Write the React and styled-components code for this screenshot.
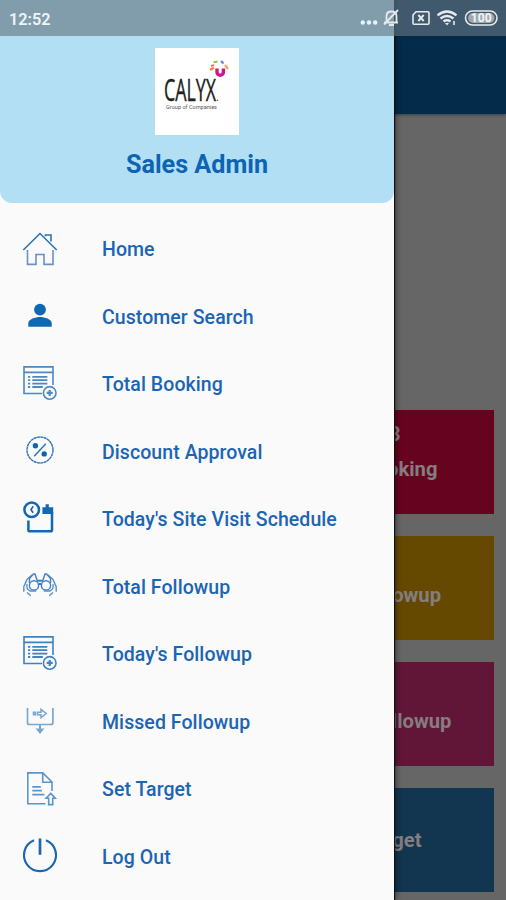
import React from 'react';
import styled, { createGlobalStyle } from 'styled-components';

const GlobalStyle = createGlobalStyle`
  * {
    box-sizing: border-box;
  }
  body {
    margin: 0;
    font-family: Roboto, sans-serif;
    overflow: hidden;
  }
`;

const Screen = styled.div`
  position: relative;
  width: 506px;
  height: 900px;
  overflow: hidden;
  background: #666;
`;

const Dashboard = styled.main`
  height: 100%;
`;

const AppBar = styled.header`
  height: 114px;
  background: #052b4a;
  box-shadow: 0 1px 3px rgba(0, 0, 0, 0.4);
`;

const CardList = styled.div`
  display: flex;
  flex-direction: column;
  align-items: flex-end;
  gap: 22px;
  padding: 296px 12px 0 0;
`;

const Card = styled.div`
  width: 238px;
  height: 104px;
  display: flex;
  flex-direction: column;
  align-items: center;
  justify-content: center;
  padding-bottom: ${props => (props.$count ? '20px' : '0')};
  background: ${props => props.$color};
  color: #857d80;
  font-size: 20.2px;
  font-weight: 700;
  line-height: 35px;
`;

const Drawer = styled.aside`
  position: absolute;
  top: 0;
  left: 0;
  width: 394px;
  height: 100%;
  background: #fafafa;
  box-shadow: 1px 0 1px #111, 2px 0 6px rgba(0, 0, 0, 0.4);
`;

const Profile = styled.div`
  height: 203px;
  padding-top: 48px;
  display: flex;
  flex-direction: column;
  align-items: center;
  background: #b2dff4;
  border-radius: 0 0 12px 12px;
`;

const Logo = styled.svg`
  width: 84px;
  height: 87px;
  background: #fff;
`;

const ProfileName = styled.h1`
  margin: 14px 0 0;
  font-size: 25.2px;
  font-weight: 700;
  line-height: 31px;
  color: #0d64b2;
`;

const Menu = styled.nav`
  display: flex;
  flex-direction: column;
  padding-top: 12px;
`;

const MenuItem = styled.a`
  height: 67.5px;
  display: flex;
  align-items: center;
  gap: 42px;
  padding-left: 20px;
  color: #1b65b4;
`;

const MenuIcon = styled.svg`
  width: 40px;
  height: 40px;
  flex-shrink: 0;
  fill: none;
  stroke: ${props => props.$color || '#2a73b8'};
  stroke-width: ${props => props.$weight || 1.4};
`;

const MenuLabel = styled.span`
  padding-top: 1.5px;
  font-size: 19.5px;
  font-weight: 500;
  letter-spacing: 0.07px;
`;

const StatusBar = styled.div`
  position: absolute;
  top: 0;
  left: 0;
  width: 100%;
  height: 36px;
  display: flex;
  align-items: center;
  justify-content: space-between;
  padding: 0 8px 0 9px;
  background: rgba(99, 117, 129, 0.63);
  color: #eef5f8;
`;

const Clock = styled.span`
  padding-top: 2px;
  font-size: 16.2px;
  font-weight: 600;
`;

const StatusIcons = styled.svg`
  width: 140px;
  height: 24px;
  fill: none;
  stroke: #e4eaee;
  stroke-width: 1.6;
`;

const HomeIcon = () => (
  <MenuIcon viewBox="0 0 40 40">
    <path d="M3.3 21 20 4.5 36.7 21M25.5 7.2V6H31v6.5" strokeWidth="1.6" />
    <path d="M7.5 21v14.4H16V25.5h8v9.9h9V21" stroke="#6c8fc9" strokeWidth="1.6" />
  </MenuIcon>
);

const PersonIcon = () => (
  <MenuIcon viewBox="0 0 40 40">
    <g fill="#0f68b4" stroke="none">
      <circle cx="20" cy="13.6" r="5.9" />
      <path d="M8.3 30.8V27c0-3.7 7.3-6 11.7-6s11.7 2.3 11.7 6v3.8z" />
    </g>
  </MenuIcon>
);

const ListIcon = ({ color = '#4c89c3' }) => (
  <MenuIcon viewBox="0 0 40 40" $color={color} $weight={1.6}>
    <path d="M22 29.5H4V2.9h29V21M4 8.4h29" />
    <path d="M8 12.8h2.2M8 16.2h2.2M8 19.6h2.2M8 23h2.2M12.3 12.8h15M12.3 16.2h15M12.3 19.6h15M12.3 23h10.5" strokeWidth="1.8" />
    <circle cx="29.7" cy="28.9" r="6.3" />
    <path d="M26.7 28.9h6M29.7 25.9v6" strokeWidth="2.2" />
  </MenuIcon>
);

const PercentIcon = () => (
  <MenuIcon viewBox="0 0 40 40">
    <circle cx="20" cy="19" r="13" strokeDasharray="3 0.4" />
    <path d="M14.2 25.2 25.8 12.8" />
    <circle cx="15.4" cy="14.8" r="2.7" fill="#0f62ad" stroke="none" />
    <circle cx="24.2" cy="22.9" r="2.7" fill="#0f62ad" stroke="none" />
  </MenuIcon>
);

const ScheduleIcon = () => (
  <MenuIcon viewBox="0 0 40 40" $color="#1268b2" $weight={2.5}>
    <circle cx="11.7" cy="10.7" r="7.3" />
    <path d="M13.2 7.2 11 10.7l2.2 3" strokeWidth="1.6" />
    <path d="M8.4 21.5V31q0 1.3 1.5 1.300h20.600q1.500 0 1.500-1.300V13" />
    <path d="M22.400 15V8.200h3.200V5.200h3.200v3h4.400V15z" fill="#1268b2" stroke="none" />
  </MenuIcon>
);

const BinocularsIcon = () => (
  <MenuIcon viewBox="0 0 40 40" $color="#3d80bf">
    <circle cx="14" cy="19.4" r="4.6" />
    <circle cx="26" cy="19.4" r="4.6" />
    <path d="M16.500 14.800h7M18.300 18h3.400" strokeWidth="2" />
    <path d="M9.500 17v-4.500l4-4.500h1.500l2 6M30.500 17v-4.500L26.500 8H25l-2 6" />
    <path d="M12.500 8.500 7 13.500l-3.200 7.200v5M27.500 8.500l5.500 5 3.200 7.200v5M7 18c-.8 4 .6 6 3.200 7h6M33 18c.8 4-.6 6-3.200 7h-6M7 26.500l3.800 3.300M33 26.500l-3.800 3.300" stroke="#5791c5" />
  </MenuIcon>
);

const MissedIcon = () => (
  <MenuIcon viewBox="0 0 40 40" $color="#79a8d2">
    <path d="M7.500 7v14.500q0 2 2 2h21.400q2 0 2-2V7" strokeWidth="1.7" />
    <path d="M13.500 11.200h1.800v2.600h-1.800zM17.500 11.200H21V8.300l5.200 4.200-5.200 4.200v-2.900h-3.500z" strokeWidth="1.600" />
    <path d="M20 24v4.500" strokeWidth="2" />
    <path d="M17 28.300h6L20 32z" fill="#79a8d2" />
  </MenuIcon>
);

const TargetIcon = () => (
  <MenuIcon viewBox="0 0 40 40" $color="#5996cc" $weight={1.6}>
    <path d="M25.500 34.800H7.800V3.900h15L32 13v9M22.700 4v9.200H32" />
    <path d="M12.300 17.800h8.500M12.300 21.600h9.500M12.300 25.600h12" strokeWidth="1.800" />
    <path d="M30.700 24.400l4.600 4.800h-2.600v6.400h-4v-6.400h-2.600z" />
  </MenuIcon>
);

const PowerIcon = () => (
  <MenuIcon viewBox="0 0 40 40" $color="#1c66ae" $weight={2.2}>
    <path d="M14 4.300a16 16 0 1 0 12 0" />
    <path d="M20 2.500v16.300" strokeWidth="2.700" />
  </MenuIcon>
);

const menuItems = [
  { label: 'Home', icon: <HomeIcon /> },
  { label: 'Customer Search', icon: <PersonIcon /> },
  { label: 'Total Booking', icon: <ListIcon /> },
  { label: 'Discount Approval', icon: <PercentIcon /> },
  { label: "Today's Site Visit Schedule", icon: <ScheduleIcon /> },
  { label: 'Total Followup', icon: <BinocularsIcon /> },
  { label: "Today's Followup", icon: <ListIcon color="#3d82c2" /> },
  { label: 'Missed Followup', icon: <MissedIcon /> },
  { label: 'Set Target', icon: <TargetIcon /> },
  { label: 'Log Out', icon: <PowerIcon /> },
];

const cards = [
  { label: 'Total Booking', count: '1,063', color: '#66041f' },
  { label: 'Total Followup', count: '0', color: '#664900' },
  { label: 'Missed Followup', count: '0', color: '#621637' },
  { label: 'Set Target', color: '#123550' },
];

const App = () => {
  return (
    <Screen>
      <GlobalStyle />
      <Dashboard>
        <AppBar />
        <CardList>
          {cards.map(card => (
            <Card key={card.label} $color={card.color} $count={card.count}>
              {card.count && <span>{card.count}</span>}
              <span>{card.label}</span>
            </Card>
          ))}
        </CardList>
      </Dashboard>
      <Drawer>
        <Profile>
          <Logo viewBox="0 0 84 87">
            <text x="9" y="53" fontSize="31.5" fontFamily="Open Sans, sans-serif" fill="#222" stroke="#222" strokeWidth="0.4" textLength="52" lengthAdjust="spacingAndGlyphs">
              CALYX
            </text>
            <circle cx="62.5" cy="52.3" r="0.8" fill="#555" />
            <text x="11" y="60.500" fontSize="5.800" fill="#555" textLength="51" lengthAdjust="spacingAndGlyphs">
              Group of Companies
            </text>
            <g fill="none" strokeWidth="2.4">
              <path d="M62 20.500v3.500a3.200 3.300 0 0 0 6.400 0v-3.500" stroke="#d0148c" strokeWidth="3.400" />
              <path d="M55 22l4-2.500" stroke="#f08a3c" />
              <path d="M56 18l3-1" stroke="#e85a4a" strokeWidth="1.800" />
              <path d="M58.500 14.300l4-.8" stroke="#8cc04c" strokeWidth="1.800" />
              <path d="M66 13l2.500 2.500" stroke="#7186cf" />
              <path d="M70 17l3 4" stroke="#f5a65a" />
            </g>
          </Logo>
          <ProfileName>Sales Admin</ProfileName>
        </Profile>
        <Menu>
          {menuItems.map(item => (
            <MenuItem key={item.label}>
              {item.icon}
              <MenuLabel>{item.label}</MenuLabel>
            </MenuItem>
          ))}
        </Menu>
      </Drawer>
      <StatusBar>
        <Clock>12:52</Clock>
        <StatusIcons viewBox="0 0 140 24">
          <g fill="#e9f2f6" stroke="none">
            <circle cx="4.8" cy="16.500" r="2.200" />
            <circle cx="11" cy="16.500" r="2.200" />
            <circle cx="17.200" cy="16.500" r="2.200" />
          </g>
          <path d="M26 16.500h14M28.500 16V10q0-4.500 5-4.500t5 4.500v6M31 19h5M26 18.500 40 4" strokeWidth="1.800" />
          <path d="M58 5.700h12q1 0 1 1v10.600q0 1-1 1H56q-1 0-1-1V9z" />
          <path d="M60.300 9l5.400 6M65.700 9l-5.400 6" strokeWidth="1.900" />
          <path d="M79.500 9.300q9.500-7.600 19 0M82.500 12.500q6.500-5 13 0M85.500 15.500q3.500-2.500 7 0" strokeWidth="2.300" />
          <path d="M87 17h4l-2 2.500z" fill="#e4eaee" stroke="none" />
          <path d="M96 15v4" />
          <rect x="107.500" y="5" width="31.500" height="14" rx="7" />
          <rect x="110" y="7" width="26.500" height="10" rx="5" fill="#a1a8ad" stroke="none" />
          <text x="123.200" y="16.200" textAnchor="middle" fontSize="12" fontWeight="700" fill="#f2f4f6" stroke="none">
            100
          </text>
        </StatusIcons>
      </StatusBar>
    </Screen>
  );
};

export default App;
